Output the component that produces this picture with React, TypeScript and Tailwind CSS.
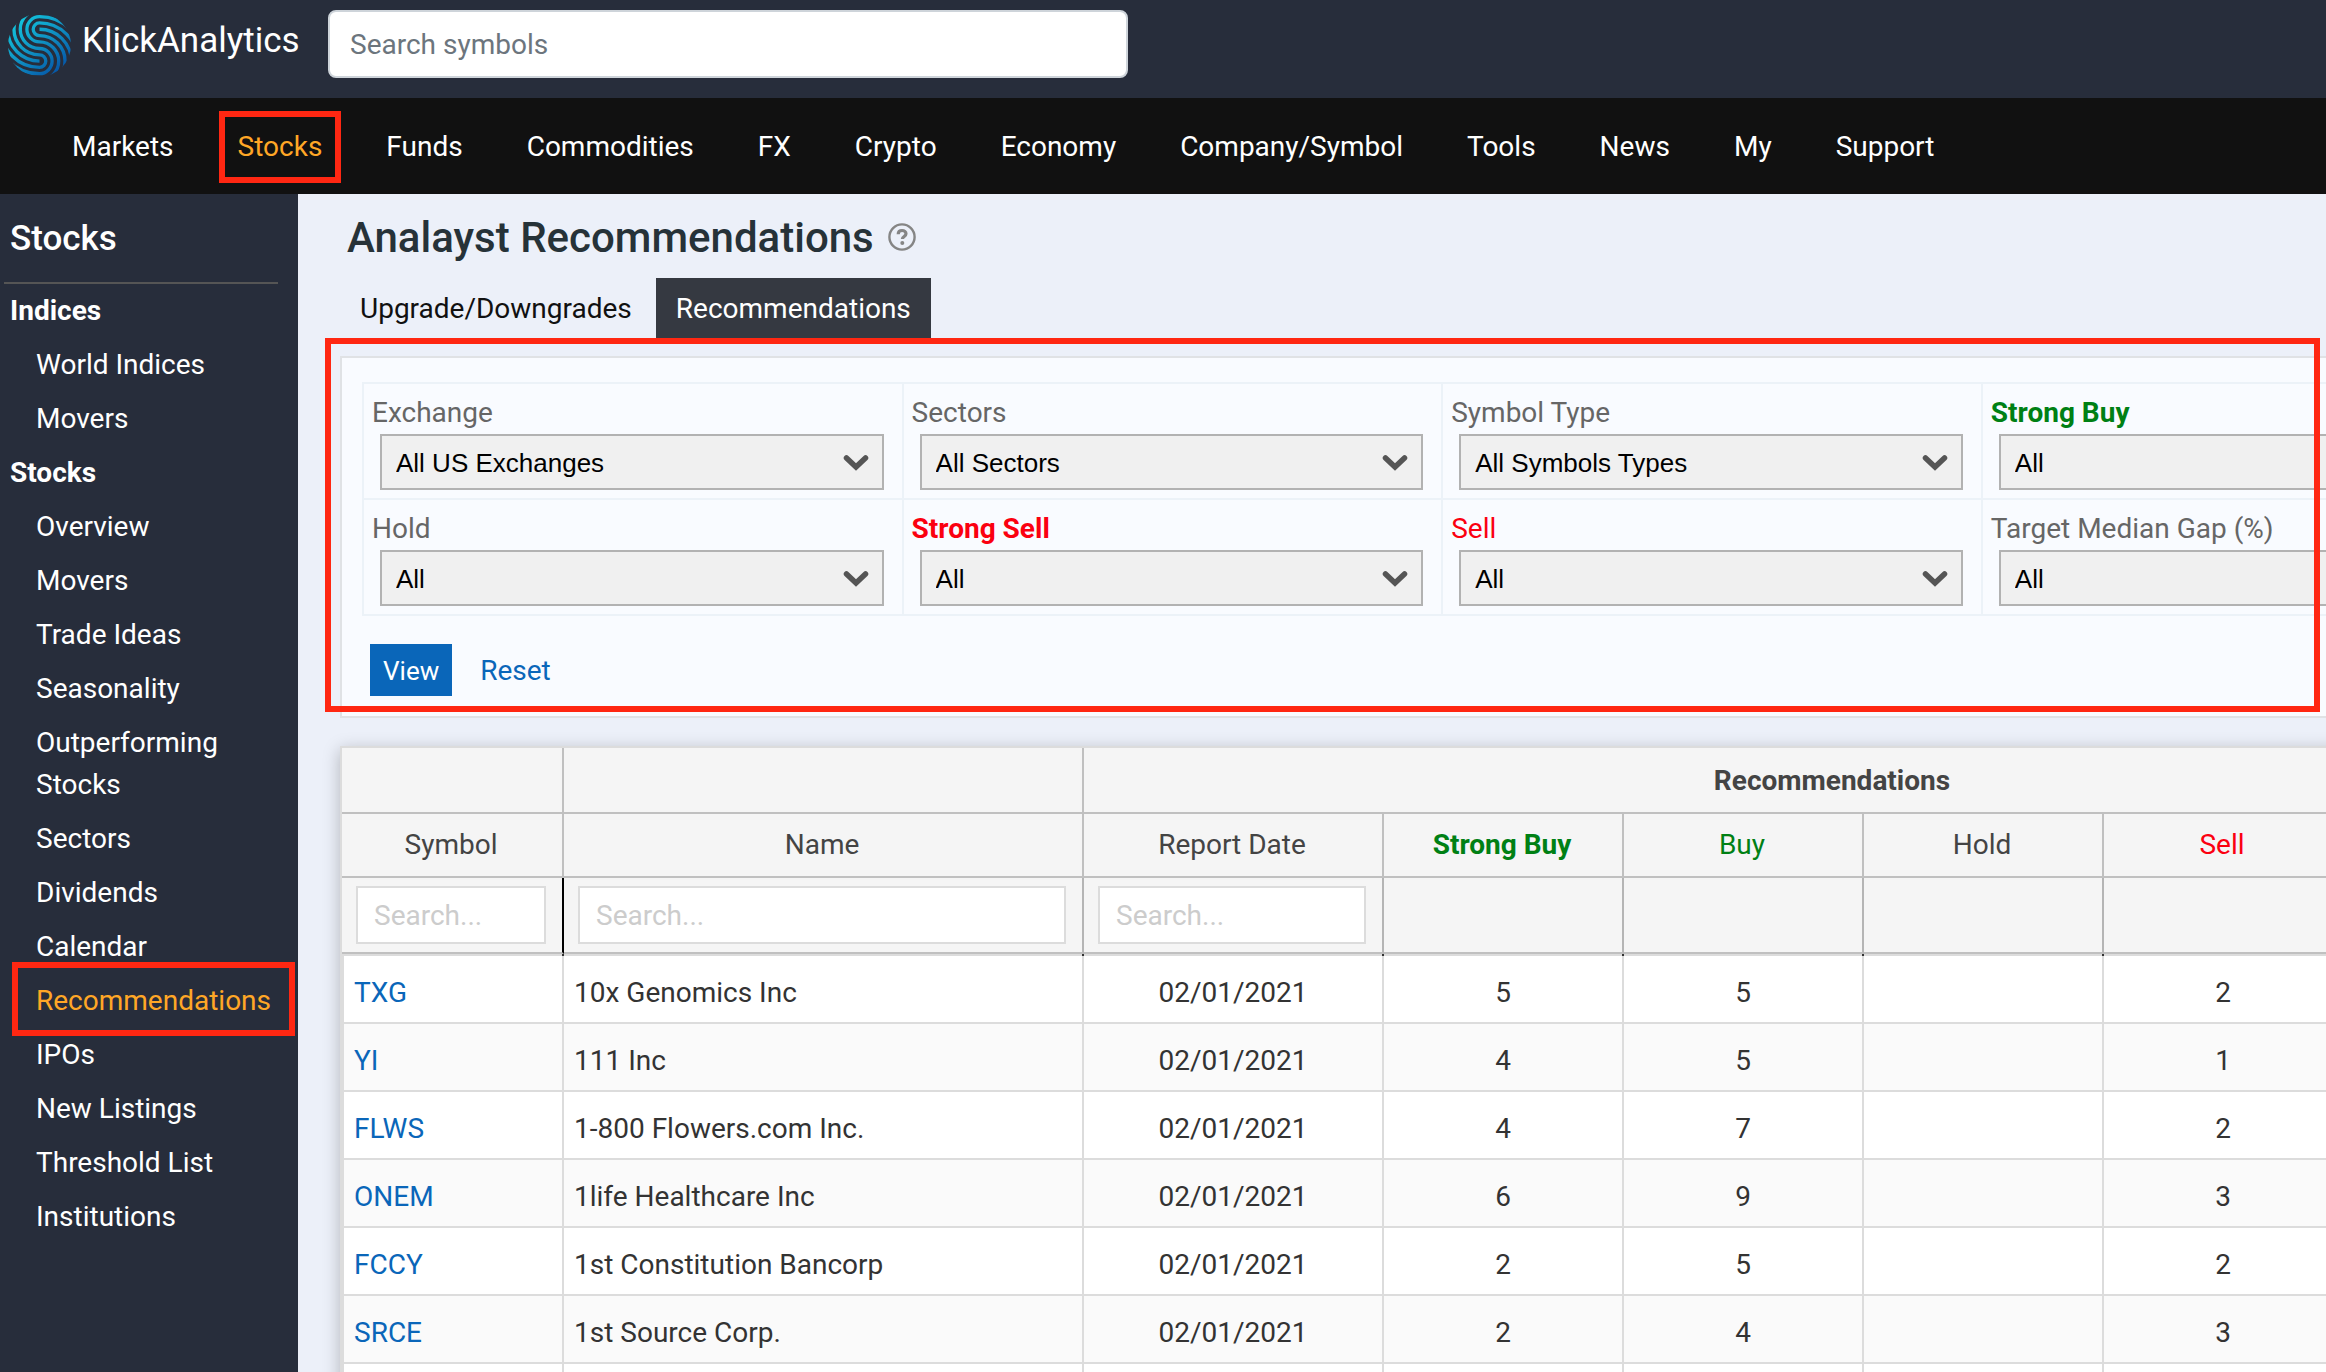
import { useState } from 'react';
import clsx from 'clsx';

const NAV = [
  'Markets',
  'Stocks',
  'Funds',
  'Commodities',
  'FX',
  'Crypto',
  'Economy',
  'Company/Symbol',
  'Tools',
  'News',
  'My',
  'Support',
];

const SIDEBAR = [
  { title: 'Indices', links: ['World Indices', 'Movers'] },
  {
    title: 'Stocks',
    links: [
      'Overview',
      'Movers',
      'Trade Ideas',
      'Seasonality',
      'Outperforming Stocks',
      'Sectors',
      'Dividends',
      'Calendar',
      'Recommendations',
      'IPOs',
      'New Listings',
      'Threshold List',
      'Institutions',
    ],
  },
];

const TABS = ['Upgrade/Downgrades', 'Recommendations'];

const FILTERS = [
  { id: 'exchange', label: 'Exchange', value: 'All US Exchanges', tone: 'text-[#666]' },
  { id: 'sectors', label: 'Sectors', value: 'All Sectors', tone: 'text-[#666]' },
  { id: 'symbol-type', label: 'Symbol Type', value: 'All Symbols Types', tone: 'text-[#666]' },
  { id: 'strong-buy', label: 'Strong Buy', value: 'All', tone: 'font-bold text-[#008014]' },
  { id: 'hold', label: 'Hold', value: 'All', tone: 'text-[#666]' },
  { id: 'strong-sell', label: 'Strong Sell', value: 'All', tone: 'font-bold text-[#fb0010]' },
  { id: 'sell', label: 'Sell', value: 'All', tone: 'text-[#fb0010]' },
  { id: 'median-gap', label: 'Target Median Gap (%)', value: 'All', tone: 'text-[#666]' },
];

const COLUMNS = [
  { label: 'Symbol', width: 'w-[222px]', tone: 'font-normal', search: true },
  { label: 'Name', width: 'w-[520px]', tone: 'font-normal', search: true },
  { label: 'Report Date', width: 'w-[300px]', tone: 'font-normal', search: true },
  { label: 'Strong Buy', width: 'w-[240px]', tone: 'font-bold text-[#008014]', search: false },
  { label: 'Buy', width: 'w-[240px]', tone: 'font-normal text-[#008014]', search: false },
  { label: 'Hold', width: 'w-[240px]', tone: 'font-normal', search: false },
  { label: 'Sell', width: 'w-[240px]', tone: 'font-normal text-[#fb0010]', search: false },
];

const ROWS = [
  { symbol: 'TXG', name: '10x Genomics Inc', date: '02/01/2021', strongBuy: 5, buy: 5, sell: 2 },
  { symbol: 'YI', name: '111 Inc', date: '02/01/2021', strongBuy: 4, buy: 5, sell: 1 },
  { symbol: 'FLWS', name: '1-800 Flowers.com Inc.', date: '02/01/2021', strongBuy: 4, buy: 7, sell: 2 },
  { symbol: 'ONEM', name: '1life Healthcare Inc', date: '02/01/2021', strongBuy: 6, buy: 9, sell: 3 },
  { symbol: 'FCCY', name: '1st Constitution Bancorp', date: '02/01/2021', strongBuy: 2, buy: 5, sell: 2 },
  { symbol: 'SRCE', name: '1st Source Corp.', date: '02/01/2021', strongBuy: 2, buy: 4, sell: 3 },
];

// each ridge hooks round the upper centre, then swings round the lower one
const RIDGES = [0, 19, 38, 58, 77, 96];

function Logo() {
  return (
    <svg viewBox="24 44 190 190" className="size-[63px]" aria-hidden="true">
      <defs>
        <linearGradient id="ridge" gradientUnits="userSpaceOnUse" x1="60" y1="60" x2="180" y2="215">
          <stop offset="0" stopColor="#12c4dc" />
          <stop offset="0.5" stopColor="#0f8fc2" />
          <stop offset="1" stopColor="#0556a8" />
        </linearGradient>
        <clipPath id="disc">
          <circle cx="119" cy="138" r="95" />
        </clipPath>
      </defs>
      <g clipPath="url(#disc)" fill="none" stroke="url(#ridge)" strokeWidth="10" strokeLinecap="round">
        {RIDGES.map((r) => (
          <path
            key={r}
            d={
              `M${215 + r} 186A${96 + r} ${96 + r} 0 0 0 119 ${90 - r}` +
              `A${r} ${r} 0 0 0 119 ${90 + r}` +
              `A${96 - r} ${96 - r} 0 0 1 119 ${282 - r}` +
              `A${192 - r} ${192 - r} 0 0 1 ${r - 73} 90`
            }
          />
        ))}
      </g>
    </svg>
  );
}

function Chevron() {
  return (
    <svg
      viewBox="0 0 26 18"
      className="pointer-events-none absolute top-1/2 right-[15px] h-[18px] w-[26px] -translate-y-1/2"
      aria-hidden="true"
    >
      <path d="M3.5 5 13 14 22.5 5" fill="none" stroke="#555" strokeWidth="5.5" strokeLinecap="round" />
    </svg>
  );
}

function TopBar() {
  return (
    <header className="flex h-[98px] items-start bg-[#272d3b] pl-2">
      <a href="#" className="flex w-[320px] items-start gap-[11px] pt-[14px] text-[35px] leading-[54px] text-white">
        <Logo />
        KlickAnalytics
      </a>
      <input
        type="search"
        aria-label="Search symbols"
        placeholder="Search symbols"
        className="mt-[10px] h-[68px] w-[800px] rounded-lg border-2 border-[#ced4da] bg-white px-5 text-[28px] placeholder:text-[#6c757d]"
      />
    </header>
  );
}

function MainNav() {
  return (
    <nav className="flex h-24 items-center bg-[#111] pt-[2px] pl-10 text-[28px] leading-[42px] text-white">
      {NAV.map((item) => (
        <a key={item} href="#" className={clsx('relative px-8', item === 'Stocks' && 'text-[#ffa726]')}>
          {item}
          {item === 'Stocks' && (
            <span className="pointer-events-none absolute inset-x-[13px] -inset-y-[15px] border-[6px] border-[#ff2712]" />
          )}
        </a>
      ))}
    </nav>
  );
}

function Sidebar() {
  return (
    <aside className="w-[298px] shrink-0 bg-[#272d3b] text-[28px] leading-[42px] text-white">
      <h2 className="mr-5 ml-1 h-[90px] border-b-2 border-[#555] px-[6px] pt-6 text-[35px] font-medium">Stocks</h2>
      {SIDEBAR.map((group) => (
        <section key={group.title}>
          <h3 className="py-[6px] pl-[10px] font-bold">{group.title}</h3>
          <ul>
            {group.links.map((link) => (
              <li key={link} className="relative py-[6px] pr-6 pl-9">
                <a href="#" className={clsx(link === 'Recommendations' && 'text-[#ffa726]')}>
                  {link}
                </a>
                {link === 'Recommendations' && (
                  <span className="pointer-events-none absolute -top-3 right-[3px] -bottom-2 left-3 border-[6px] border-[#ff2712]" />
                )}
              </li>
            ))}
          </ul>
        </section>
      ))}
    </aside>
  );
}

function Filters() {
  return (
    <div className="relative mt-4">
      <form
        className="w-[111%] border-2 border-[#e0e2e5] bg-[#f9fbff] px-5 pt-6 pb-5"
        onSubmit={(e) => e.preventDefault()}
      >
        <div className="grid grid-cols-4 border-t-2 border-l-2 border-[#ecf2f8]">
          {FILTERS.map((filter) => (
            <div key={filter.id} className="border-r-2 border-b-2 border-[#ecf2f8] pt-2 pr-[18px] pb-2 pl-2">
              <label htmlFor={filter.id} className={clsx('block text-[28px] leading-[42px]', filter.tone)}>
                {filter.label}
              </label>
              <div className="relative ml-2">
                <select
                  id={filter.id}
                  className="block h-14 w-full appearance-none border-2 border-[#b2b2b2] bg-[#f0f0f0] px-[14px] pt-[2px] font-['Liberation_Sans',Arial,sans-serif] text-[26px] text-black"
                >
                  <option>{filter.value}</option>
                </select>
                <Chevron />
              </div>
            </div>
          ))}
        </div>
        <div className="mt-7 ml-2 flex items-center gap-7">
          <button type="submit" className="h-[52px] bg-[#0a66b9] px-[13px] pt-[2px] text-[26px] text-white">
            View
          </button>
          <button type="reset" className="pt-[2px] text-[28px] text-[#0a66b9]">
            Reset
          </button>
        </div>
      </form>
      <span className="pointer-events-none absolute -top-[18px] right-[6px] bottom-[6px] -left-[15px] border-[6px] border-[#ff2712]" />
    </div>
  );
}

function RecommendationsTable() {
  const head = 'border-r-2 border-b-2 border-[#c0c0c0] bg-[#f5f5f5] pr-[2px]';
  const cell = 'border-r-2 border-b-2 border-[#dcdcdc] px-[10px] pt-[7px]';

  return (
    <div className="mt-7 w-max border-2 border-[#dcdcdc] bg-white shadow-[0_4px_16px_rgba(0,0,0,0.25)]">
      <table className="table-fixed border-separate border-spacing-0 text-[28px] leading-[42px] text-[#333]">
        <thead className="text-[#444]">
          <tr className="h-[66px]">
            <th className={head} />
            <th className={head} />
            <th className={clsx(head, 'pt-[2px] font-bold')} colSpan={6}>
              Recommendations
            </th>
          </tr>
          <tr className="h-16">
            {COLUMNS.map((col) => (
              <th key={col.label} scope="col" className={clsx(head, col.width, col.tone)}>
                {col.label}
              </th>
            ))}
            <th className={clsx(head, 'w-[240px]')} />
          </tr>
          <tr className="h-[76px]">
            {COLUMNS.map((col) => (
              <td
                key={col.label}
                className={clsx(
                  'border-r-2 border-b-2 border-b-[#c0c0c0] bg-[#f5f5f5] pr-4 pl-[14px]',
                  col.label === 'Symbol' ? 'border-r-black' : 'border-r-[#b5b5b5]'
                )}
              >
                {col.search && (
                  <input
                    type="text"
                    aria-label={`Search ${col.label}`}
                    placeholder="Search..."
                    className="block h-[58px] w-full border-2 border-[#dcdcdc] bg-white px-4 placeholder:text-[#ccc]"
                  />
                )}
              </td>
            ))}
            <td className={head} />
          </tr>
          <tr aria-hidden="true">
            {COLUMNS.map((col) => (
              <td key={col.label} className="h-[2px] border-r-2 border-[#333] bg-[#dcdcdc]" />
            ))}
            <td className="bg-[#dcdcdc]" />
          </tr>
        </thead>
        <tbody>
          {ROWS.map((row) => (
            <tr key={row.symbol} className="h-[68px] text-center even:bg-[#fafafa]">
              <td className={clsx(cell, 'border-l-2 text-left')}>
                <a href="#" className="text-[#0a66b9]">
                  {row.symbol}
                </a>
              </td>
              <td className={clsx(cell, 'text-left')}>{row.name}</td>
              <td className={cell}>{row.date}</td>
              <td className={cell}>{row.strongBuy}</td>
              <td className={cell}>{row.buy}</td>
              <td className={cell} />
              <td className={cell}>{row.sell}</td>
              <td className={cell} />
            </tr>
          ))}
          <tr className="h-[68px]">
            <td className={clsx(cell, 'border-l-2')} />
            {COLUMNS.map((col) => (
              <td key={col.label} className={cell} />
            ))}
          </tr>
        </tbody>
      </table>
    </div>
  );
}

export default function App() {
  const [tab, setTab] = useState('Recommendations');

  return (
    <div className="flex h-screen flex-col overflow-hidden bg-[#ecf0f9] font-[Roboto,sans-serif]">
      <TopBar />
      <MainNav />
      <div className="flex min-h-0 flex-1">
        <Sidebar />
        <main className="min-w-0 flex-1 overflow-hidden pl-[42px]">
          <div className="flex h-[84px] items-center gap-[14px] pt-[2px] pl-[7px] text-[#263238]">
            <h1 className="text-[42px] font-medium">Analayst Recommendations</h1>
            <svg viewBox="0 0 28 28" className="size-7" fill="none" stroke="#858585" aria-hidden="true">
              <circle cx="14" cy="14" r="12.6" strokeWidth="2.4" />
              <path d="M10.2 11.2c0-2.4 1.7-3.7 3.9-3.7s3.9 1.3 3.9 3.3c0 2.6-3.6 2.7-3.6 5.2" strokeWidth="3.2" />
              <circle cx="14.3" cy="20" r="2" fill="#858585" stroke="none" />
            </svg>
          </div>
          <div className="flex gap-1 text-[28px]" role="tablist">
            {TABS.map((t) => (
              <button
                key={t}
                type="button"
                role="tab"
                aria-selected={tab === t}
                onClick={() => setTab(t)}
                className={clsx('h-[62px] px-5', tab === t ? 'bg-[#353941] text-white' : 'text-[#111]')}
              >
                {t}
              </button>
            ))}
          </div>
          <Filters />
          <RecommendationsTable />
        </main>
      </div>
    </div>
  );
}
